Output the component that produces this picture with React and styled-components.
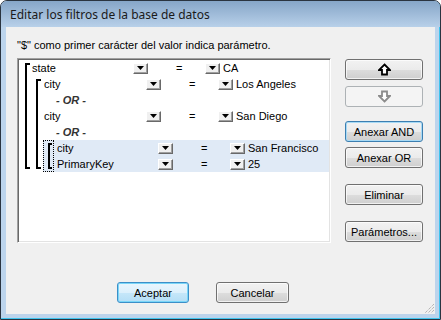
import React from 'react';
import styled, { createGlobalStyle, css } from 'styled-components';

const GlobalStyle = createGlobalStyle`
  html, body { margin: 0; padding: 0; background: #ffffff; }
  body { font-family: "Liberation Sans", Arial, sans-serif; font-size: 11px; color: #000; }
`;

const Window = styled.div`
  box-sizing: border-box;
  width: 441px;
  height: 320px;
  border: 1px solid #2a3440;
  border-radius: 7px 7px 0 0;
  background: #bcd4ec;
  box-shadow: inset -1px -1px 0 #3fc4ee;
  display: flex;
  flex-direction: column;
  overflow: hidden;
`;

const TitleBar = styled.div`
  height: 26px;
  flex: none;
  display: flex;
  align-items: center;
  padding-left: 9px;
  background: linear-gradient(#86a6c8, #b8d0e9);
  font-family: "Noto Sans", "Liberation Sans", sans-serif;
  font-size: 12px;
  color: #1a1a1a;
`;

const Client = styled.div`
  box-sizing: border-box;
  margin: 0 5px 5px 5px;
  height: 287px;
  background: #f0f0f0;
  display: flex;
  flex-direction: column;
  padding: 12px 12px 0 11px;
`;

const Hint = styled.div`
  line-height: 13px;
  margin-bottom: 6px;
`;

const MainRow = styled.div`
  display: flex;
  gap: 14px;
  align-items: flex-start;
`;

const ListBox = styled.div`
  box-sizing: border-box;
  width: 314px;
  height: 185px;
  padding: 1px;
  border: 1px solid;
  border-color: #a0a0a0 #ffffff #ffffff #a0a0a0;
  box-shadow: inset 1px 1px 0 #696969, inset -1px -1px 0 #e3e3e3;
  background: #ffffff;
  overflow: hidden;
`;

const Group = styled.div`
  display: flex;
  margin-left: ${(p) => p.$indent}px;
`;

const Bracket = styled.div`
  flex: none;
  width: ${(p) => p.$w || 3}px;
  margin: ${(p) => p.$m ?? 3}px 0;
  border: 2px solid #000;
  border-right: none;
`;

const GroupBody = styled.div`
  flex: 1;
  display: flex;
  flex-direction: column;
`;

const SelectedGroup = styled.div`
  display: flex;
  margin-left: 2px;
  background: #e0eaf6;
`;

const FocusBox = styled.div`
  box-sizing: border-box;
  flex: none;
  width: 11px;
  display: flex;
  padding: 1px 0 1px 4px;
  border: 1px dotted #000;
`;

const Row = styled.div`
  display: flex;
  align-items: center;
  height: 16px;
  white-space: nowrap;
  padding-left: ${(p) => p.$pad}px;
`;

const Field = styled.span`
  flex: none;
  width: ${(p) => p.$w}px;
`;

const OrLabel = styled.span`
  font-weight: bold;
  font-style: italic;
  color: #333;
`;

const Eq = styled.span`
  box-sizing: border-box;
  flex: none;
  width: 57px;
  padding-left: 28px;
`;

const Value = styled.span`
  margin-left: 3px;
`;

const DropBtn = styled.span`
  box-sizing: border-box;
  flex: none;
  width: 15px;
  height: 11px;
  display: flex;
  align-items: center;
  justify-content: center;
  background: #f0f0f0;
  border: 1px solid;
  border-color: #ffffff #696969 #696969 #ffffff;
  box-shadow: inset -1px -1px 0 #a0a0a0;
`;

const SideCol = styled.div`
  display: flex;
  flex-direction: column;
  width: 78px;
  padding-top: 1px;
`;

const Btn = styled.button`
  box-sizing: border-box;
  width: ${(p) => p.$w || 78}px;
  height: 21px;
  margin: 0;
  margin-top: ${(p) => p.$gap || 0}px;
  padding: 0;
  display: flex;
  align-items: center;
  justify-content: center;
  font-family: "Liberation Sans", Arial, sans-serif;
  font-size: 11px;
  color: #000;
  border: 1px solid #707070;
  border-radius: 3px;
  background: linear-gradient(#f2f2f2 0%, #ebebeb 50%, #dddddd 51%, #cfcfcf 100%);
  box-shadow: inset 0 0 0 1px rgba(255, 255, 255, 0.7);
  ${(p) =>
    p.$variant === 'focus' &&
    css`
      border-color: #3c7fb1;
      box-shadow: inset 0 0 0 1px #a8daf5;
    `}
  ${(p) =>
    p.$variant === 'default' &&
    css`
      border-color: #3c8fc8;
      background: linear-gradient(#eaf6fd 0%, #dcf0fc 50%, #c6e7f9 51%, #b4def6 100%);
      box-shadow: inset 0 0 0 1px #7ad6f8;
    `}
  ${(p) =>
    p.disabled &&
    css`
      border-color: #adb2b5;
      background: #f4f4f4;
      box-shadow: none;
    `}
`;

const Footer = styled.div`
  margin-top: auto;
  display: flex;
  align-items: flex-end;
  padding-left: 100px;
`;

const FooterBtns = styled.div`
  display: flex;
  gap: 27px;
  margin-bottom: 11px;
`;

const Grip = styled.svg`
  margin-left: auto;
  margin-right: -12px;
  flex: none;
`;

function DropArrow() {
  return (
    <svg width="7" height="4" viewBox="0 0 7 4">
      <polygon points="0,0 7,0 3.5,4" fill="#000" />
    </svg>
  );
}

function Arrow({ down, color }) {
  const pts = down
    ? '6.5,11.5 12,6 9,6 9,1.5 4,1.5 4,6 1,6'
    : '6.5,1.5 12,7 9,7 9,11.5 4,11.5 4,7 1,7';
  return (
    <svg width="13" height="13" viewBox="0 0 13 13">
      <polygon points={pts} fill="#fff" stroke={color} strokeWidth="1.8" strokeLinejoin="miter" />
    </svg>
  );
}

function Condition({ field, value, pad, w }) {
  return (
    <Row $pad={pad}>
      <Field $w={w}>{field}</Field>
      <DropBtn>
        <DropArrow />
      </DropBtn>
      <Eq>=</Eq>
      <DropBtn>
        <DropArrow />
      </DropBtn>
      <Value>{value}</Value>
    </Row>
  );
}

export default function App() {
  return (
    <>
      <GlobalStyle />
      <Window>
        <TitleBar>Editar los filtros de la base de datos</TitleBar>
        <Client>
          <Hint>"$" como primer carácter del valor indica parámetro.</Hint>
          <MainRow>
            <ListBox>
              <Group $indent={6}>
                <Bracket />
                <GroupBody>
                  <Condition field="state" value="CA" pad={2} w={101} />
                  <Group $indent={6}>
                    <Bracket />
                    <GroupBody>
                      <Condition field="city" value="Los Angeles" pad={3} w={102} />
                      <Row $pad={15}>
                        <OrLabel>- OR -</OrLabel>
                      </Row>
                      <Condition field="city" value="San Diego" pad={3} w={102} />
                      <Row $pad={15}>
                        <OrLabel>- OR -</OrLabel>
                      </Row>
                      <SelectedGroup>
                        <FocusBox>
                          <Bracket $w={2} $m={1} />
                        </FocusBox>
                        <GroupBody>
                          <Condition field="city" value="San Francisco" pad={3} w={101} />
                          <Condition field="PrimaryKey" value="25" pad={3} w={101} />
                        </GroupBody>
                      </SelectedGroup>
                    </GroupBody>
                  </Group>
                </GroupBody>
              </Group>
            </ListBox>
            <SideCol>
              <Btn>
                <Arrow color="#000" />
              </Btn>
              <Btn $gap={6} disabled>
                <Arrow down color="#8c8c8c" />
              </Btn>
              <Btn $gap={14} $variant="focus">Anexar AND</Btn>
              <Btn $gap={5}>Anexar OR</Btn>
              <Btn $gap={16}>Eliminar</Btn>
              <Btn $gap={16}>Parámetros...</Btn>
            </SideCol>
          </MainRow>
          <Footer>
            <FooterBtns>
              <Btn $w={72} $variant="default">Aceptar</Btn>
              <Btn $w={73}>Cancelar</Btn>
            </FooterBtns>
            <Grip width="12" height="12" viewBox="0 0 12 12">
              <path d="M11 2 L2 11 M11 5 L5 11 M11 8 L8 11" stroke="#9a9a9a" strokeWidth="1" strokeDasharray="1 1" />
            </Grip>
          </Footer>
        </Client>
      </Window>
    </>
  );
}
